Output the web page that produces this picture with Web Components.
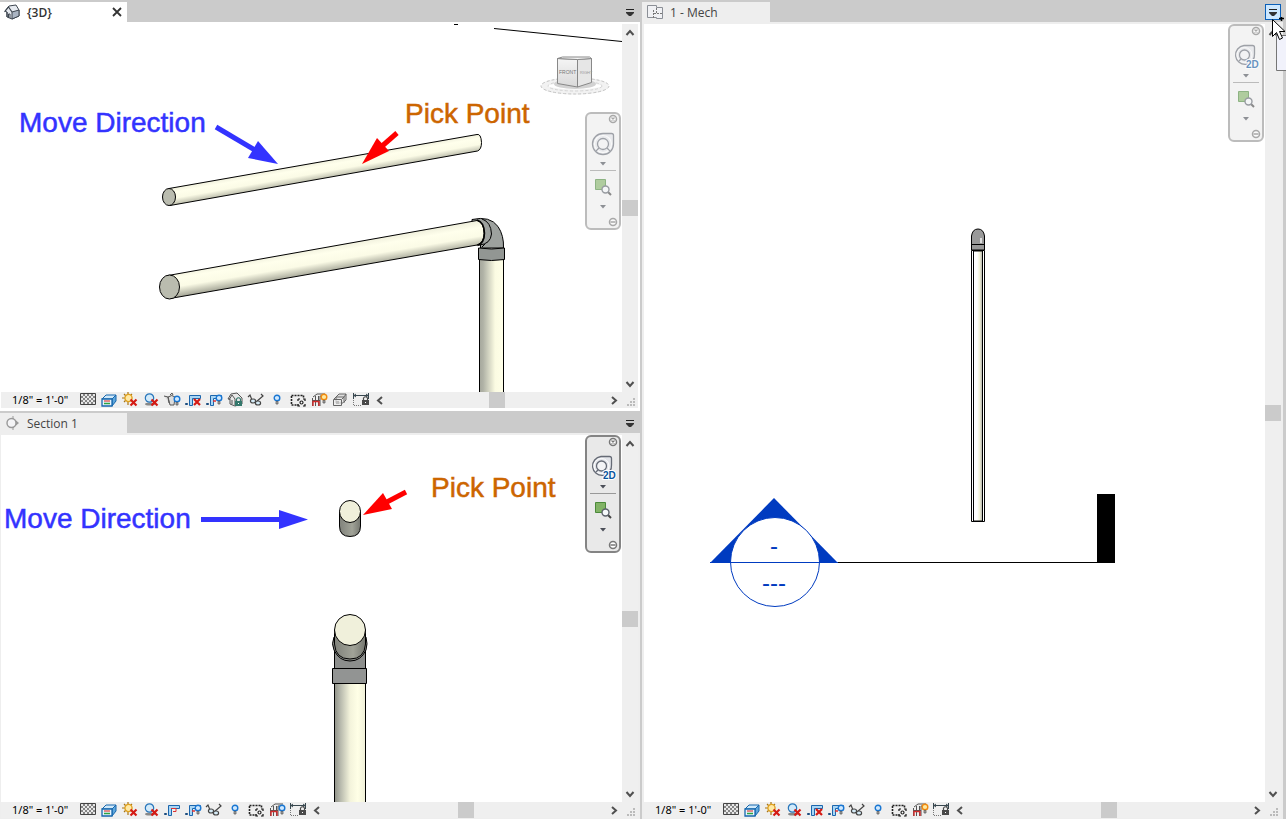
<!DOCTYPE html>
<html lang="en">
<head>
<meta charset="utf-8">
<title>Model views</title>
<style>
html, body { height: 100%; margin: 0; }
body { background: #cbcbcb; font-family: "Open Sans", "Noto Sans", sans-serif; font-size: 12px; color: #444; overflow: hidden; }
</style>
</head>
<body>
<view-workspace></view-workspace>
<script>
const redX = '<path d="M8.500 7.500l6 6M14.500 7.500l-6 6" stroke="#d41a14" stroke-width="2.200"/>';
const bulb = (x, y, c, f) => `<circle cx="${x}" cy="${y}" r="2.8" fill="${f}" stroke="${c}" stroke-width="1.4"/><path d="M${x - 1} ${y + 3.4}h2v2.6h-2z" fill="#aaa" stroke="#555" stroke-width=".7"/>`;
const crop = '<path d="M4.500 13.500v-10h11v3h-8v7z" fill="#a9d6f5" stroke="#1c66ad"/><path d="M0 12h3M1.500 11v2" stroke="#1c4e80" stroke-width="1.300"/>';
const frame = '<path d="M1.500 6v8M4.500 4v10M7.500 4v10M1 8.500h8M2 5l4-3h8M9 4h4M9 4v10M13 4v3" fill="none" stroke="#555"/><path d="M2 14V9.500h6V14" fill="none" stroke="#d32b2b" stroke-width="1.400"/>';
let checks = '';
for (let r = 0; r < 5; r++) for (let c = 0; c < 7; c++) if ((r + c) % 2) checks += `<path d="M${1 + c * 2} ${2 + r * 2}h2v2h-2z"/>`;
const lock = (x, y, c) => `<path d="M${x + 1.5} ${y}v-2q2-2.500 4 0v2" fill="none" stroke="${c}" stroke-width="1.200"/><rect x="${x}" y="${y}" width="7" height="5" fill="${c}"/><path d="M${x + 3} ${y + 2}h1v1h-1z" fill="#fff"/>`;

const ICONS = {
  home: '<path d="M1 7l4-5 7-1 3 5v6l-7 3-5-2V8z" fill="#e6eaf0" stroke="#3e4650"/><path d="M8 8l7-2v6l-7 3z" fill="#aab4c2" stroke="#3e4650"/><path d="M0.500 8l4-5 3.500 5M3 8v5" fill="none" stroke="#3e4650" stroke-width="1.200"/><path d="M4.500 14v-4h1.500v4" fill="none" stroke="#3e4650"/>',
  section: '<path d="M9 1v14" stroke="#999"/><path d="M9 3l6 5-6 5z" fill="#999"/><circle cx="7.500" cy="8" r="4.500" fill="#f4f4f6" stroke="#999" stroke-width="1.400"/>',
  plan: '<path d="M0.500 1.500h9v2h6v11h-6v-1h-9z" fill="#f0f1f4" stroke="#8b8f96"/><path d="M6.500 6v8M7 9.500h8M9.500 4v5" fill="none" stroke="#777" stroke-dasharray="2 1"/>',
  detail: '<path d="M0.500 1.500h15v11h-15z" fill="#e8e8e8" stroke="#444"/><g fill="#858585">' + checks + '</g>',
  style: '<path d="M1 7l4-4h10l-4 4z" fill="#cfe9fa" stroke="#1767ad"/><path d="M11 7l4-4v6l-4 5z" fill="#5fa7dc" stroke="#1767ad"/><path d="M1 7h10v7H1z" fill="#e9f5fd" stroke="#1767ad" stroke-width="1.300"/><path d="M3 9h6" stroke="#e04141" stroke-width="1.200"/><path d="M3 11.500h6" stroke="#2ea343" stroke-width="1.500"/>',
  sun: '<path d="M6 0v3M6 10v3M0 6h3M2 2l2 2M10 2l-2 2M2 10l2-2" stroke="#a87414" stroke-width="1.200"/><circle cx="6.500" cy="6" r="3.600" fill="#ffe9a5" stroke="#e0a21e" stroke-width="1.300"/>' + redX,
  shadow: '<ellipse cx="7" cy="12" rx="5" ry="1.600" fill="#888"/><circle cx="6.500" cy="6" r="4.200" fill="#d2eafa" stroke="#2876bb" stroke-width="1.200"/>' + redX,
  teapot: '<path d="M0 4l4 1 1 6M4 5q4-3 7 0l-1 8H6zM6 3l2-2 1 2" fill="#ddd" stroke="#555"/>' + bulb(13, 7, '#1976d2', '#cfe9ff'),
  cropoff: crop + '<path d="M9 7l6 6M15 7l-6 6" stroke="#d41a14" stroke-width="2.200"/>',
  crop: crop + '<path d="M7 6.500h5v3H9" fill="none" stroke="#d33"/>',
  croplight: crop + '<path d="M7 9h3" stroke="#d33" stroke-width="1.500"/>' + bulb(13, 6, '#1976d2', '#cfe9ff'),
  homelock: '<path d="M1 7l3-5 6-1 5 5v6l-7 2-5-2V7z" fill="#e8e8e8" stroke="#555"/><path d="M8 7l-3-4-3 5M8 7v6M5 8v4" fill="none" stroke="#555"/>' + lock(8, 9, '#34786c'),
  glasses: '<path d="M0 5l2-2 2 5M8 10l7-6-2-2" fill="none" stroke="#444" stroke-width="1.200"/><ellipse cx="5" cy="9" rx="2.600" ry="2" fill="#d6ecf8" stroke="#444" stroke-width="1.200"/><ellipse cx="10" cy="11" rx="2.600" ry="2" fill="#d6ecf8" stroke="#444" stroke-width="1.200"/>',
  bulb: bulb(8, 6, '#1976d2', '#cfe9ff'),
  temp: '<path d="M1.500 4v9h7M1.500 3.500h12v3" fill="none" stroke="#222" stroke-width="1.600" stroke-dasharray="2 1"/><rect x="3" y="5" width="9" height="6" fill="#eee"/><path d="M8 7h2M13 7h2v2M15 12v2h-2M10 14H8v-2M8 9V7" fill="none" stroke="#111" stroke-width="1.200"/><circle cx="11.500" cy="10.500" r="1.500" fill="#fff" stroke="#222" stroke-width="1.200"/>',
  frameorange: frame + bulb(13, 5, '#f08a10', '#ffe9a0'),
  frameblue: frame + bulb(13, 6, '#1976d2', '#cfe9ff'),
  boxes: '<path d="M4 5l3-3h7v6l-3 3H4z" fill="#ddd" stroke="#666"/><path d="M1.500 7.500h8v6h-8zM4 5h8v6M12 5l2-3M2 7l2-2M10 7l2-2" fill="#eee" fill-opacity=".7" stroke="#666"/><path d="M4 9h3v3H4z" fill="#bbb"/>',
  dims: '<path d="M0.500 1v6M15.500 1v6M1 3.500h14" fill="none" stroke="#37474f"/><path d="M3 2l-2 1.500 2 1.500M13 2l2 1.500-2 1.500" fill="none" stroke="#37474f"/><path d="M0.500 8v5.500H8" fill="none" stroke="#777" stroke-dasharray="1 1"/>' + lock(9, 8, '#4a4a4a'),
  left: '<path d="M10 5l-4 3.500 4 3.500" fill="none" stroke="#505050" stroke-width="2"/>',
  right: '<path d="M6 5l4 3.500-4 3.500" fill="none" stroke="#505050" stroke-width="2"/>',
  up: '<path d="M4.500 11L8 7l3.500 4" fill="none" stroke="#505050" stroke-width="2"/>',
  down: '<path d="M4.500 6L8 10l3.500-4" fill="none" stroke="#505050" stroke-width="2"/>',
  close: '<path d="M4 4l8 8M12 4l-8 8" stroke="#333" stroke-width="1.800"/>',
  menu: '<path d="M4 5h8v1H4z" fill="#222"/><path d="M4 8h8v1l-3 3H7L4 9z" fill="#333"/>',
  more: '<path d="M5 6h6L8 9.500z" fill="#4b4f58"/>',
  navclose: '<circle cx="8" cy="8" r="3.500" fill="#fff" stroke="#777" stroke-width="1.500"/><path d="M6.500 6.500l3 3M9.500 6.500l-3 3" stroke="#777" stroke-width="1.200"/>',
  navmin: '<circle cx="8" cy="8" r="3.500" fill="#fff" stroke="#777" stroke-width="1.500"/><path d="M5.500 8h5" stroke="#777" stroke-width="1.500"/>',
  zoom: '<path d="M0.500 0.500h10v10h-10z" fill="#82b366" stroke="#4b8a3a"/><path d="M12 12l4 4" stroke="#444" stroke-width="2"/><circle cx="10.500" cy="10.500" r="3.500" fill="#f6f9fb" stroke="#5c626b" stroke-width="1.400"/>'
};

function define(name, css, html) {
  customElements.define(name, class extends HTMLElement {
    connectedCallback() {
      if (this.shadowRoot) return;
      const root = this.attachShadow({ mode: 'open' });
      const t = document.createElement('template');
      t.innerHTML = `<style>*{box-sizing:border-box}button{border:0;padding:0;margin:0;background:none;font:inherit;color:inherit;display:flex;align-items:center;justify-content:center}${css}</style>` + (typeof html === 'function' ? html(this) : html);
      root.append(t.content.cloneNode(true));
    }
  });
}

define('ui-icon', ':host{display:block;width:16px;height:16px;flex:none}svg{display:block;overflow:visible}',
  el => `<svg width="16" height="16" viewBox="0 0 16 16" aria-hidden="true">${ICONS[el.getAttribute('name')]}</svg>`);

define('steering-wheel', ':host{display:block;width:24px;height:24px}svg{display:block;overflow:visible}',
  el => {
    const flat = el.hasAttribute('flat');
    const shape = flat
      ? '<path d="M10 1.500h8.500q2 0 2 2V10A9.500 9.500 0 1 1 10 1.500z" fill="#e3e5ea" stroke="#666b76" stroke-width="1.300"/><circle cx="10.500" cy="11" r="7.500" fill="none" stroke="#fff"/><circle cx="10.500" cy="11" r="5" fill="#f3f4f6" stroke="#666b76" stroke-width="1.300"/><path d="M7 15l-2 2" stroke="#666b76" stroke-width="1.200"/>'
      : '<path d="M12 1.500h8.500q2 0 2 2V12A10.500 10.500 0 1 1 12 1.500z" fill="#e3e5ea" stroke="#666b76" stroke-width="1.300"/><circle cx="12" cy="12" r="8.500" fill="none" stroke="#fff" stroke-width="1.200"/><circle cx="12" cy="12" r="5.500" fill="#f3f4f6" stroke="#666b76" stroke-width="1.300"/><path d="M8 16l-3 3M16 16l3 3" stroke="#666b76" stroke-width="1.200"/>';
    return `<svg width="24" height="24" viewBox="0 0 24 24">${shape}${flat ? '<text x="12" y="24" font-family="Liberation Sans, sans-serif" font-weight="700" font-size="10" fill="#0a559e" stroke="#fff" stroke-width="2" paint-order="stroke">2D</text>' : ''}</svg>`;
  });

define('nav-bar',
  `:host{display:block;width:36px;height:118px;border-radius:6px}
  nav{height:118px;display:flex;flex-direction:column;align-items:center;border:2px solid #848484;border-radius:6px;background:#e9e9e9}
  :host([faded]) nav{border-color:#bcbcbc;background:#f3f3f3}
  :host([faded]) button{opacity:.6}
  .corner{align-self:flex-end;width:12px;height:10px}
  .wheel,.zoom{width:26px;height:30px}.wheel{margin-top:5px}
  .more{width:26px;height:10px}
  hr{width:26px;height:1px;border:0;background:#999;margin:1px 0}
  :host([faded]) hr{background:#bbb}
  .min{margin-top:5px}`,
  el => `<nav aria-label="Navigation">
  <button class="corner" aria-label="Close"><ui-icon name="navclose"></ui-icon></button>
  <button class="wheel" aria-label="Steering wheel"><steering-wheel ${el.hasAttribute('flat') ? 'flat' : ''}></steering-wheel></button>
  <button class="more" aria-label="Wheel options"><ui-icon name="more"></ui-icon></button><hr>
  <button class="zoom" aria-label="Zoom region"><ui-icon name="zoom"></ui-icon></button>
  <button class="more" aria-label="Zoom options"><ui-icon name="more"></ui-icon></button>
  <button class="corner min" aria-label="Minimize"><ui-icon name="navmin"></ui-icon></button></nav>`);

define('scroll-bar',
  `:host{display:flex;flex-direction:column;background:#efefef;align-items:center;justify-content:space-between}
  :host([horizontal]){flex-direction:row;flex:1;min-width:0}
  .thumb{width:16px;height:16px;background:#cbcbcb}button{width:16px;height:16px}`,
  el => {
    const h = el.hasAttribute('horizontal');
    return `<button aria-label="Scroll back"><ui-icon name="${h ? 'left' : 'up'}"></ui-icon></button><div class="thumb"></div><button aria-label="Scroll forward"><ui-icon name="${h ? 'right' : 'down'}"></ui-icon></button>`;
  });

define('view-controls',
  `:host{display:flex;height:16px;background:#efefef;color:#111;min-width:0}
  .scale{flex:none;width:77px;padding-left:11px;justify-content:flex-start;font:11px/18px "Noto Sans","Open Sans",sans-serif;color:#000;white-space:nowrap}
  .tool{flex:none;width:21px;height:16px;padding-left:2px;justify-content:flex-start}
  .grip{width:16px;height:16px;flex:none}`,
  el => `<button class="scale">1/8" = 1'-0"</button>${el.getAttribute('tools').split(' ').map(n => `<button class="tool" aria-label="${n}"><ui-icon name="${n}"></ui-icon></button>`).join('')}
  <scroll-bar horizontal></scroll-bar><svg class="grip" viewBox="0 0 16 16" fill="#bbb" aria-hidden="true"><path d="M11 6h2v2h-2zM11 9h2v2h-2zM11 12h2v2h-2zM8 9h2v2H8zM8 12h2v2H8zM5 12h2v2H5z"/></svg>`);

define('view-tabs',
  `:host{display:flex;height:22px;align-items:flex-end;background:#cbcbcb}
  .tab{display:flex;align-items:center;width:127px;height:20px;background:#eee;padding:0 2px 0 4px}
  .name{flex:1;gap:7px;justify-content:flex-start;font-size:12px;line-height:20px;color:#444}
  .label{padding-top:2px}
  :host([active]) .tab{background:#fff}
  :host([active]) .name{font-weight:600;color:#333}
  :host([wide]) .tab{width:128px;padding-left:5px}
  .menu{margin:0 2px 2px auto;width:16px;height:16px}
  .menu.hot{background:#cde8ff;border:1px solid #0a5fb8}`,
  el => `<div class="tab"><button class="name"><ui-icon name="${el.getAttribute('icon')}"></ui-icon><span class="label"><slot></slot></span></button>${el.hasAttribute('active') ? '<button aria-label="Close view"><ui-icon name="close"></ui-icon></button>' : ''}</div>
  <button class="menu ${el.hasAttribute('hot') ? 'hot' : ''}" aria-label="View list"><ui-icon name="menu"></ui-icon></button>`);

define('view-pane',
  `:host{display:flex;flex-direction:column;min-width:0;min-height:0}
  .frame{flex:1;min-height:0;display:grid;grid-template-columns:minmax(0,1fr) 16px;grid-template-rows:minmax(0,1fr) 16px;border:solid #eee;border-width:2px 2px 1px 1px;background:#efefef}
  :host([active]) .frame{border-color:#fff;border-bottom-width:3px}
  :host([wide]) .frame{border-left-width:2px}
  .canvas{position:relative;background:#fff;overflow:hidden;min-width:0}
  view-controls{grid-column:1/3}
  ::slotted(nav-bar){position:absolute;right:1px;top:var(--nav-top,0)}`,
  el => {
    const a = n => el.hasAttribute(n) ? n : '';
    return `<view-tabs icon="${el.getAttribute('icon')}" ${a('active')} ${a('wide')} ${a('hot')}>${el.getAttribute('label')}</view-tabs>
  <div class="frame"><div class="canvas"><slot></slot></div><scroll-bar></scroll-bar><view-controls tools="${el.getAttribute('tools')}"></view-controls></div>`;
  });

const drawingCss = ':host{display:block;width:100%;height:100%}svg{display:block;width:100%;height:100%}.note{font:28px "Liberation Sans",Arial,sans-serif;stroke-width:.5}.blue{fill:#33f;stroke:#33f}.orange{fill:#cc6500;stroke:#cc6500}';

define('model-drawing', drawingCss, `<svg viewBox="1 24 621 368" preserveAspectRatio="xMinYMin slice">
<defs>
<linearGradient id="a" gradientUnits="userSpaceOnUse" x1="320" y1="162" x2="323" y2="179"><stop offset="0" stop-color="#f1f1de"/><stop offset=".25" stop-color="#ffffec"/><stop offset=".6" stop-color="#fbfbe6"/><stop offset="1" stop-color="#b9baa9"/></linearGradient>
<linearGradient id="b" gradientUnits="userSpaceOnUse" x1="320" y1="248" x2="324" y2="272"><stop offset="0" stop-color="#f1f1de"/><stop offset=".25" stop-color="#ffffec"/><stop offset=".6" stop-color="#fbfbe6"/><stop offset="1" stop-color="#a9aa9b"/></linearGradient>
<linearGradient id="c"><stop offset="0" stop-color="#a6a89d"/><stop offset=".15" stop-color="#b0b2a6"/><stop offset=".65" stop-color="#fbfbe2"/><stop offset="1" stop-color="#ffffe8"/></linearGradient>
<linearGradient id="cube" x2="0" y2="1"><stop offset="0" stop-color="#f5f5f5"/><stop offset="1" stop-color="#d9d9d9"/></linearGradient>
</defs>
<path d="M454 24.500h4M494 28.500L622 41.500" stroke="#000"/>
<g stroke="#000" stroke-width="1">
<path d="M169 188.500L477 134.500q4-1 4.500 8 0 7-4 8.500L170 205.500z" fill="url(#a)"/>
<ellipse cx="169" cy="197" rx="6.500" ry="8.500" fill="#babcaf"/>
<path d="M479.500 259h24v140h-24z" fill="url(#c)"/>
<path d="M472 219.500q18-4 26 7 6 9 5.500 21.500h-23V245q-4 0-8-1z" fill="#9da19e"/>
<path d="M168 275.500L477 220.500q7 2 7 13 0 9-7 11.500L170 298.500z" fill="url(#b)"/>
<path d="M477 220q7 2 7.500 13 0 10-7 12.500" fill="none" stroke-width="1.500"/><path d="M482 219q9 3 9.500 15-1 10-12 11M482 247l3-3" fill="none"/>
<ellipse cx="169.500" cy="287" rx="10" ry="12" fill="#babcaf"/>
<path d="M478.500 248q13 2 26 0v11.500q-13 2-26 0z" fill="#929693"/>
</g>
<path d="M216 127l39 23" stroke="#33f" stroke-width="5"/><path d="M278 164l-30-6 10-17z" fill="#33f"/>
<path d="M397 133l-16 14" stroke="#f00" stroke-width="5"/><path d="M362 164l15-26 12 13z" fill="#f00"/>
<text class="note blue" x="19" y="132">Move Direction</text>
<text class="note orange" x="405" y="123">Pick Point</text>
<g><ellipse cx="575" cy="86" rx="31" ry="6" fill="none" stroke="#f2f2f2" stroke-width="5"/><ellipse cx="575" cy="86" rx="34" ry="8" fill="none" stroke="#c4c4c4" stroke-dasharray="3 2"/><ellipse cx="575" cy="86" rx="27" ry="5" fill="none" stroke="#d4d4d4" stroke-dasharray="3 2"/>
<ellipse cx="575" cy="84" rx="21" ry="5" fill="#d2d2d2"/>
<path d="M557.500 58.500l20 1v27.500l-20-3.500z" fill="url(#cube)" stroke="#888"/><path d="M577.500 59.500l14-1v24l-14 4.500z" fill="#e6e6e6" stroke="#888"/><path d="M557.500 58.500l5-1.500h27l2 1.500-14 1z" fill="#f8f8f8" stroke="#888"/>
<text x="559" y="74" font-family="Liberation Sans, sans-serif" font-size="5" fill="#777">FRONT</text><text x="580" y="74" font-family="Liberation Sans, sans-serif" font-size="4" fill="#999">RIGHT</text></g>
</svg>`);

define('section-drawing', drawingCss, `<svg viewBox="1 435 621 367" preserveAspectRatio="xMinYMin slice">
<defs><linearGradient id="p"><stop offset="0" stop-color="#8f9188"/><stop offset=".2" stop-color="#b9bbae"/><stop offset=".5" stop-color="#f3f3db"/><stop offset=".75" stop-color="#ffffe6"/><stop offset="1" stop-color="#f0f0d8"/></linearGradient>
<linearGradient id="q" x2="1" y2="0"><stop offset="0" stop-color="#80827b"/><stop offset=".6" stop-color="#a1a398"/><stop offset="1" stop-color="#757770"/></linearGradient></defs>
<g stroke="#000">
<path d="M339.500 511v15q0 10.500 10.500 10.500T360.500 526v-15z" fill="url(#q)"/><ellipse cx="350" cy="511.500" rx="10.500" ry="11" fill="#f0f0db"/>
<path d="M334.500 683h31v130h-31z" fill="url(#p)"/>
<path d="M334.500 645h31v24h-31z" fill="#8c8e8c"/>
<path d="M334 637q-3 7 0 13 5 11 16 11t16-11q2-6 0-13z" fill="#8a8c87"/>
<path d="M334.500 630v14q1 15 15.500 15t15.500-15v-14z" fill="url(#q)"/>
<circle cx="350" cy="630" r="15.500" fill="#f0f0db"/>
<path d="M332.500 668.500h34v15h-34z" fill="#929493"/></g>
<path d="M201 519.500h80" stroke="#33f" stroke-width="5"/><path d="M308 519.500l-29-9.500v19z" fill="#33f"/>
<path d="M406 492l-21 11" stroke="#f00" stroke-width="5"/><path d="M363 515l20-22 9 16z" fill="#f00"/>
<text class="note blue" x="4" y="528">Move Direction</text>
<text class="note orange" x="431" y="497">Pick Point</text></svg>`);

define('plan-drawing', drawingCss, `<svg viewBox="644 24 621 778" preserveAspectRatio="xMinYMin slice">
<defs><linearGradient id="p"><stop offset=".4" stop-color="#fff"/><stop offset=".7" stop-color="#f0f0d4"/><stop offset="1" stop-color="#aaa"/></linearGradient></defs>
<path d="M971.500 250V236q1-7 6.500-7t6.500 7v14z" fill="#999" stroke="#000"/><path d="M980 238h2v5h-2z" fill="#ddd"/><path d="M971.500 244.500h13" stroke="#000"/>
<path d="M971.500 250.500h13v271h-13z" fill="#fff" stroke="#000"/><path d="M973.500 251h9v270h-9z" fill="url(#p)" stroke="#000"/>
<path d="M837 562.500h261" stroke="#000"/><path d="M1097 494h18v69h-18z"/>
<path d="M710 563l64-65 64 65z" fill="#003bc0"/><circle cx="775" cy="562" r="44.500" fill="#fff" stroke="#003bc0"/><path d="M710 562.500h128" stroke="#003bc0"/>
<g font-family="Liberation Sans, sans-serif" font-size="24" text-anchor="middle" fill="#003bc0"><text x="774" y="554">-</text><text x="774" y="591">---</text></g></svg>`);

define('pointer-hint',
  ':host{display:block;width:14px;height:54px;overflow:hidden}svg{display:block}',
  `<svg width="14" height="54" viewBox="1272 17 14 54" aria-hidden="true"><path d="M1276.500 35.500h12v35h-12z" fill="#f1f2fb" stroke="#767676"/><path d="M1281.500 17v4M1279 18.500h5" stroke="#000" stroke-width="1.500"/><path d="M1272.500 19.500v17l4-4 3 7 3-1.500-3-6.500h5.500z" fill="#fff" stroke="#000"/></svg>`);

define('view-workspace',
  `:host{display:grid;position:relative;height:100vh;grid-template-columns:640fr 643fr;column-gap:2px;padding-right:1px;background:#cbcbcb}
  .left{display:grid;grid-template-rows:411fr 408fr;min-width:0;min-height:0}
  .right{margin-right:2px}
  .threed{--nav-top:88px}.section{--nav-top:0px}
  pointer-hint{position:absolute;right:0;top:17px}`,
  `<div class="left">
  <view-pane class="threed" active label="{3D}" icon="home" tools="detail style sun shadow teapot cropoff croplight homelock glasses bulb temp frameorange boxes dims"><model-drawing></model-drawing><nav-bar faded></nav-bar></view-pane>
  <view-pane class="section" label="Section 1" icon="section" tools="detail style sun shadow crop croplight glasses bulb temp frameblue dims"><section-drawing></section-drawing><nav-bar flat></nav-bar></view-pane></div>
  <view-pane class="right" wide hot label="1 - Mech" icon="plan" tools="detail style sun shadow cropoff croplight glasses bulb temp frameorange dims"><plan-drawing></plan-drawing><nav-bar flat faded></nav-bar></view-pane>
  <pointer-hint></pointer-hint>`);
</script>
</body>
</html>
